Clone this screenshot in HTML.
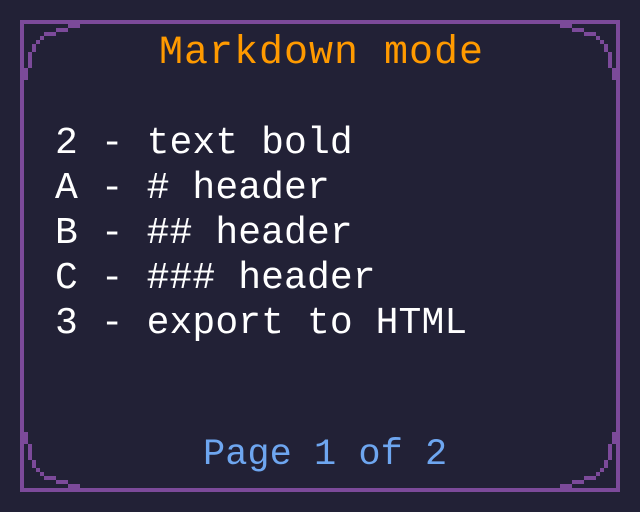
<!DOCTYPE html>
<html><head><style>
html,body{margin:0;padding:0;background:#222136;width:640px;height:512px;overflow:hidden}
.t{position:absolute;font-family:"Liberation Mono",monospace;white-space:pre;line-height:1}
</style></head><body>
<svg width="640" height="512" style="position:absolute;left:0;top:0">
<defs><g id="c" fill="#7c4a9a">
<rect x="68" y="24" width="12" height="4"/><rect x="56" y="28" width="12" height="4"/>
<rect x="44" y="32" width="12" height="4"/><rect x="40" y="36" width="4" height="4"/>
<rect x="36" y="40" width="4" height="4"/><rect x="32" y="44" width="4" height="8"/>
<rect x="28" y="52" width="4" height="16"/><rect x="24" y="68" width="4" height="12"/>
</g></defs>
<g fill="#7c4a9a">
<rect x="20" y="20" width="600" height="4"/><rect x="20" y="488" width="600" height="4"/>
<rect x="20" y="20" width="4" height="472"/><rect x="616" y="20" width="4" height="472"/>
</g>
<use href="#c"/>
<use href="#c" transform="translate(640,0) scale(-1,1)"/>
<use href="#c" transform="translate(0,512) scale(1,-1)"/>
<use href="#c" transform="translate(640,512) scale(-1,-1)"/>
</svg>
<div class="t" style="left:159px;top:34px;font-size:40px;letter-spacing:1px;color:#ff9a00">Markdown mode</div>
<div class="t" style="left:55px;top:121px;font-size:38px;letter-spacing:0.1px;color:#fff;line-height:45px">2 - text bold
A - # header
B - ## header
C - ### header
3 - export to HTML</div>
<div class="t" style="left:203px;top:437px;font-size:37px;color:#6ea6f0">Page 1 of 2</div>
</body></html>
